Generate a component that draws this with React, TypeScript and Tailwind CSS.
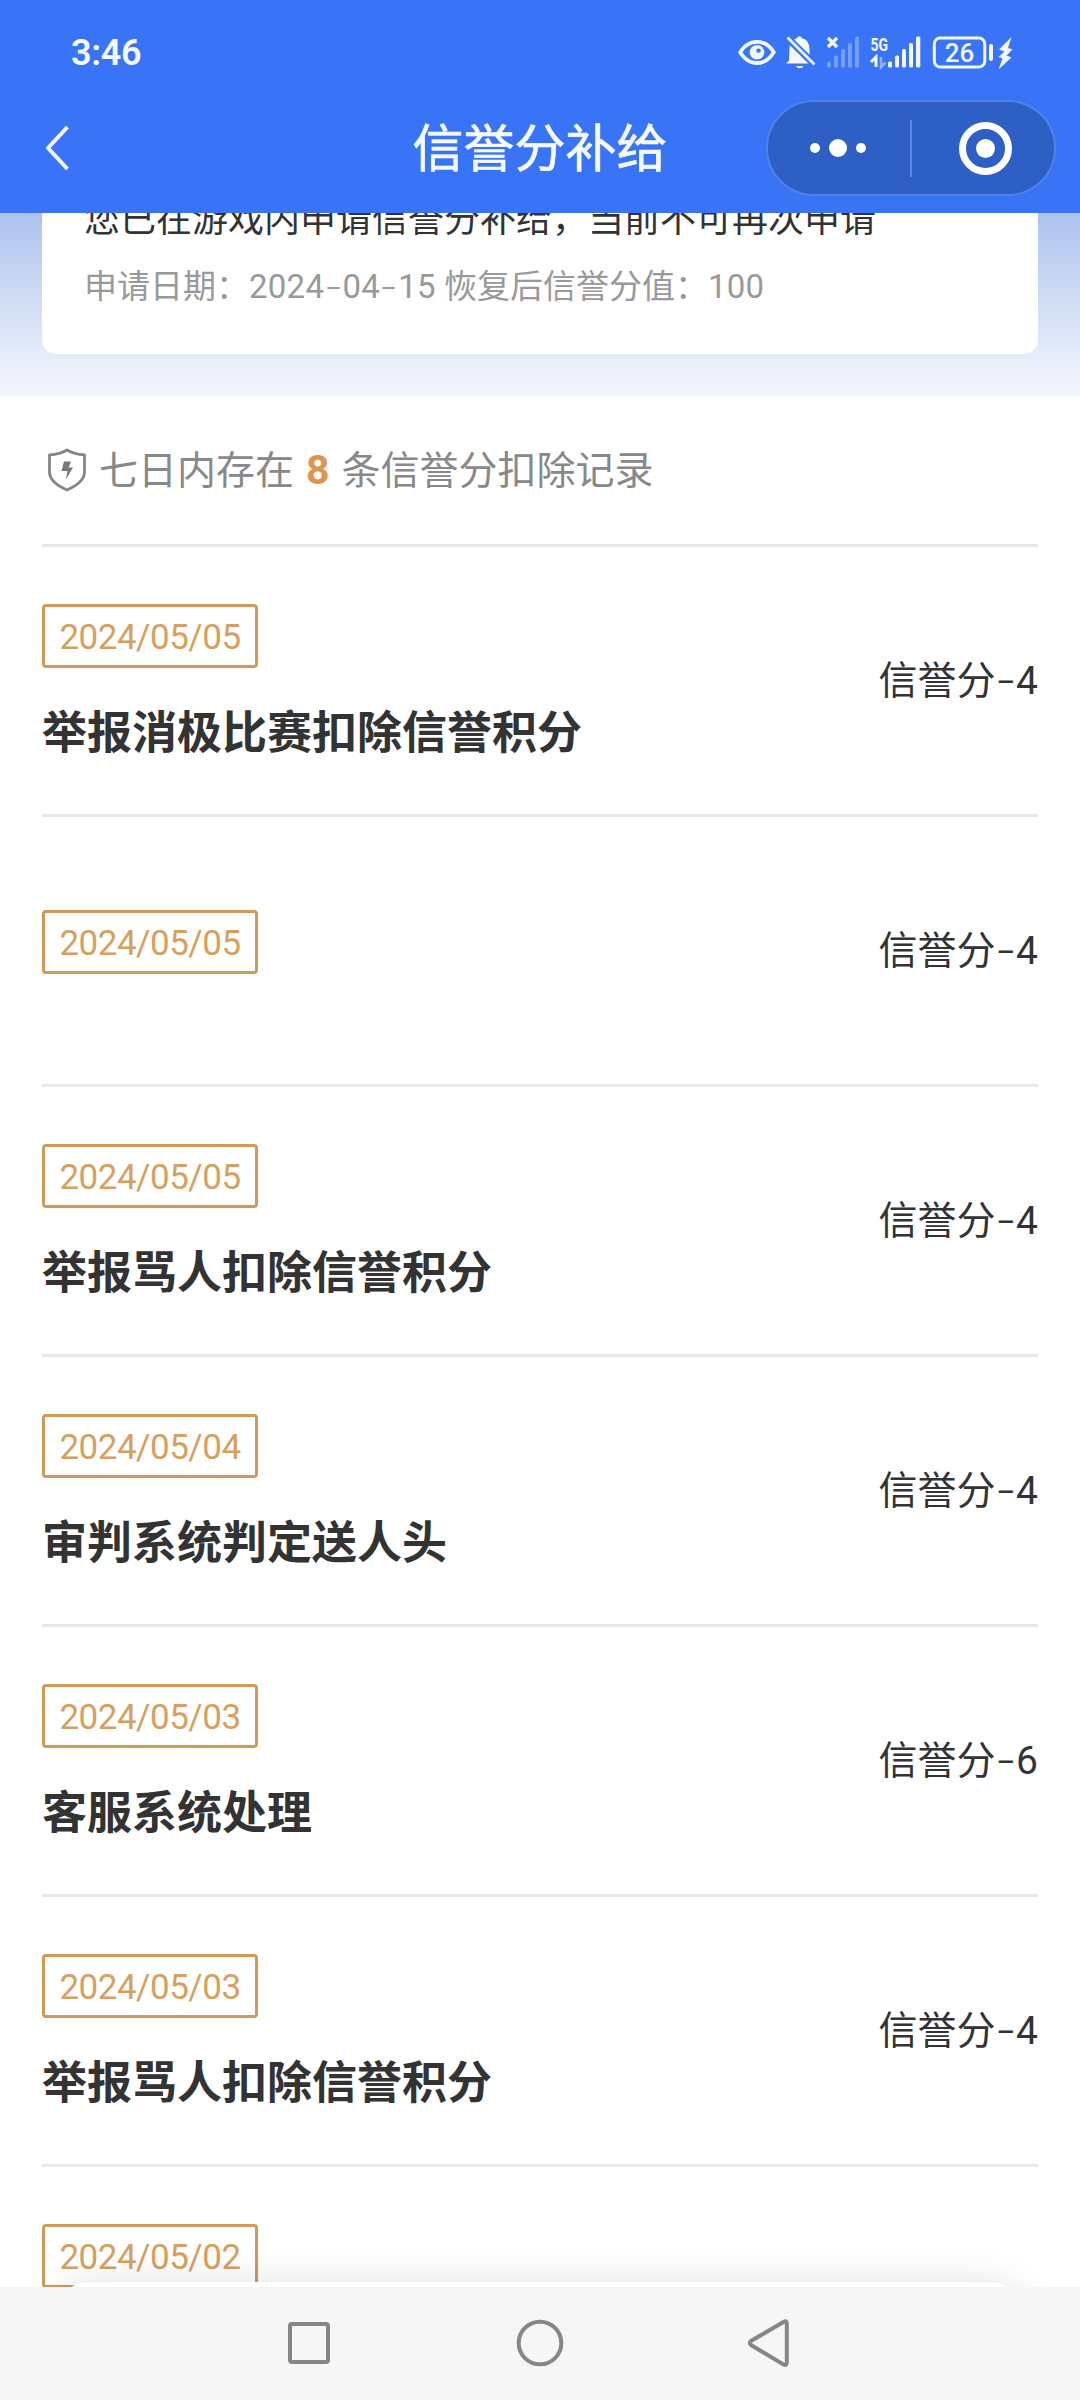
import type { ReactNode } from "react";

type RecordItem = { date: string; title?: string; score: number };

const records: RecordItem[] = [
  { date: "2024/05/05", title: "举报消极比赛扣除信誉积分", score: 4 },
  { date: "2024/05/05", score: 4 },
  { date: "2024/05/05", title: "举报骂人扣除信誉积分", score: 4 },
  { date: "2024/05/04", title: "审判系统判定送人头", score: 4 },
  { date: "2024/05/03", title: "客服系统处理", score: 6 },
  { date: "2024/05/03", title: "举报骂人扣除信誉积分", score: 4 },
];

function Dash() {
  return <span className="mx-[1.500px] inline-block scale-x-120 font-[Inter] font-light">-</span>;
}

function Digits({ children }: { children: ReactNode }) {
  return <span className="tracking-[0.25px]">{children}</span>;
}

function StatusIcons() {
  return (
    <svg className="ml-auto mr-[64px] h-[40px] w-[280px]" viewBox="736 32 280 40" fill="#f3f8ff">
      {/* eye */}
      <path fillRule="evenodd" d="M738 52.300C743 44 749 40 757 40S771 44 776 52.300C771 60.500 765 65 757 65S743 60.500 738 52.300ZM742.500 52.300C746 58 751 61 757 61S768 58 771.500 52.300C768 46.800 763 43.800 757 43.800S746 46.800 742.500 52.300Z" />
      <circle cx="757" cy="52.300" r="7.300" />
      <circle cx="758.600" cy="50.600" r="2.200" fill="#3974f6" />
      {/* muted bell */}
      <path d="M789 60.500 786 63.500H812L809.500 58.500V49C809.500 42.500 806 39 802 38.300C801.500 35.500 797.500 35.500 797 38.300C792 39.500 789.500 43.500 789.500 49ZM796 66H803.500C802.500 69 797 69 796 66Z" />
      <path d="M787.500 38 815 65" stroke="#3974f6" strokeWidth="7" />
      <path d="M787.500 37.500 814.500 64.500" stroke="#f3f8ff" strokeWidth="2.600" />
      {/* no-service signal */}
      <path d="M828 38 837 47M837 38 828 47" stroke="#f3f8ff" strokeWidth="3.200" />
      <g opacity=".32">
        <rect x="827" y="61.500" width="4" height="6" rx="1.500" />
        <rect x="834" y="55.500" width="4" height="12" rx="1.500" />
        <rect x="841" y="49" width="4" height="18.500" rx="1.500" />
        <rect x="848" y="43" width="4" height="24.500" rx="1.500" />
        <rect x="855" y="36.500" width="4" height="31" rx="1.500" />
      </g>
      {/* 5G signal */}
      <text x="870.500" y="50.500" fontFamily="Roboto" fontWeight="700" fontSize="18.500" textLength="17.500" lengthAdjust="spacingAndGlyphs">5G</text>
      <path d="M871 62 876 57V67" stroke="#f3f8ff" strokeWidth="3" fill="none" />
      <path d="M881 57V67L885.500 62.500" stroke="#8fb2fa" strokeWidth="2.600" fill="none" />
      <rect x="888" y="61.500" width="4" height="6" rx="1.500" />
      <rect x="895" y="55.500" width="4" height="12" rx="1.500" />
      <rect x="902" y="49" width="4" height="18.500" rx="1.500" />
      <rect x="909" y="43" width="4" height="24.500" rx="1.500" />
      <rect x="916" y="36.500" width="4.300" height="31" rx="1.500" />
      {/* battery */}
      <rect x="934.300" y="38" width="50.500" height="29" rx="6" fill="none" stroke="#f3f8ff" strokeWidth="3" />
      <text x="959.500" y="61.500" textAnchor="middle" fontFamily="Roboto" fontWeight="500" fontSize="26">26</text>
      <rect x="989" y="44" width="4" height="17" rx="2" />
      <path d="M1011.500 37 999 49.500 1004.500 51.500 998.500 57 1002.500 58.500 998.500 69.500 1011.500 57.500 1006.500 55.500 1012.500 49.500 1008 48Z" />
    </svg>
  );
}

function Header() {
  return (
    <header className="relative z-10 flex h-[213px] shrink-0 flex-col bg-[#3974f6] text-[#f6faff]">
      <div className="flex h-[104px] items-center pl-[71px]">
        <span className="mt-[2px] font-[Roboto] text-[36px] font-semibold leading-none tracking-[-0.3px]">3:46</span>
        <StatusIcons />
      </div>
      <div className="relative -mt-1 flex h-[96px] items-center justify-center">
        <svg className="absolute left-[43px] top-[23px] h-[50px] w-[28px]" viewBox="0 0 28 50" fill="none" stroke="#f6faff" strokeWidth="4">
          <path d="M24.500 4 5 25 24.500 46" strokeLinejoin="round" />
        </svg>
        <h1 className="mt-[3px] text-[51px] font-normal leading-none [-webkit-text-stroke:0.7px_#f6faff]">信誉分补给</h1>
        <div className="absolute right-[24px] top-0 flex h-[96px] w-[290px] items-center rounded-full border-2 border-[#4f84e6] bg-[#2d5fc5]">
          <div className="flex w-[142px] items-center justify-center gap-[9px] pr-[2px]">
            <i className="size-[10px] rounded-full bg-white" />
            <i className="size-[18px] rounded-full bg-white" />
            <i className="size-[10px] rounded-full bg-white" />
          </div>
          <div className="h-[57px] w-[2px] bg-[#5a89e6]" />
          <div className="flex flex-1 items-center justify-center pl-[5px]">
            <div className="flex size-[53px] items-center justify-center rounded-full border-[7px] border-white">
              <i className="size-[19px] rounded-full bg-white" />
            </div>
          </div>
        </div>
      </div>
    </header>
  );
}

function DateTag({ children }: { children: ReactNode }) {
  return (
    <div className="flex h-[64px] w-[216px] items-center justify-center rounded-[4px] border-[3px] border-[#d29a58] pt-[3px] font-[Roboto] text-[35px] font-normal leading-none tracking-[-0.5px] text-[#d6a060]">
      {children}
    </div>
  );
}

function Row({ item }: { item: RecordItem }) {
  return (
    <li className="flex h-[270px] items-center justify-between border-t-[3px] border-[#e8e8e8]">
      <div className={item.title ? "h-[153px]" : "h-[81px]"}>
        <DateTag>{item.date}</DateTag>
        {item.title && (
          <h2 className="mt-[34px] text-[45px] font-bold leading-[64px] text-[#333]">{item.title}</h2>
        )}
      </div>
      <p className="text-[39px] leading-none text-[#333]">
        信誉分<Dash />{item.score}
      </p>
    </li>
  );
}

export default function App() {
  return (
    <div className="flex h-[2400px] w-[1080px] flex-col overflow-hidden bg-white font-[Roboto,'Noto_Sans_CJK_SC',sans-serif]">
      <Header />
      <main className="relative flex min-h-0 flex-1 flex-col">
        <section className="h-[183px] shrink-0 bg-linear-to-b from-[#adc2ee] via-[#d2def5] to-[#f5f7fe] px-[42px]">
          <div className="h-[141px] rounded-b-[14px] bg-white px-[42px]">
            <p className="relative -top-[18px] whitespace-nowrap text-[36px] leading-[50px] text-[#333]">您已在游戏内申请信誉分补给，当前不可再次申请</p>
            <p className="whitespace-nowrap text-[33px] leading-[46px] text-[#999]">
              申请日期：<Digits>2024<Dash />04<Dash />15</Digits> 恢复后信誉分值：<Digits>100</Digits>
            </p>
          </div>
        </section>
        <section className="shrink-0 px-[42px]">
          <div className="flex h-[148px] items-center pl-[5px] text-[39px] leading-none text-[#888]">
            <svg className="mr-[12px] h-[44px] w-[40px]" viewBox="0 0 40 44" fill="none" stroke="#858585" strokeWidth="2.800" strokeLinejoin="round">
              <path d="M20 2C15 5 9 6.500 2.500 7V24C2.500 32 11 38 20 42C29 38 37.500 32 37.500 24V7C31 6.500 25 5 20 2Z" />
              <path d="M17 13.500H24L21.500 19.500H26L19 31.500 20.500 23H14.500Z" fill="#777" stroke="none" />
            </svg>
            <p>
              七日内存在<b className="mx-[12px] text-[41px] font-bold leading-none text-[#e0954a]">8</b>条信誉分扣除记录
            </p>
          </div>
          <ul>
            {records.map((item, i) => (
              <Row key={i} item={item} />
            ))}
            <li className="border-t-[3px] border-[#e8e8e8] pt-[57px]">
              <DateTag>2024/05/02</DateTag>
            </li>
          </ul>
        </section>
        <div className="absolute left-[58px] top-[2069px] h-[60px] w-[964px] rounded-[40px] bg-white shadow-[0_4px_40px_rgba(0,0,0,0.14)]" />
      </main>
      <nav className="relative z-10 flex h-[113px] shrink-0 items-center justify-center bg-[#f6f6f6]">
        <svg className="h-[60px] w-[520px]" viewBox="280 2314 520 60" fill="none" stroke="#868686" strokeWidth="4">
          <rect x="290" y="2324" width="38" height="38" rx="2" />
          <circle cx="540" cy="2343" r="21.300" />
          <path d="M751 2341Q748.500 2343 751 2345L783.500 2364.500Q786.800 2366 786.800 2362.500V2323.500Q786.800 2320 783.500 2322Z" />
        </svg>
      </nav>
    </div>
  );
}
